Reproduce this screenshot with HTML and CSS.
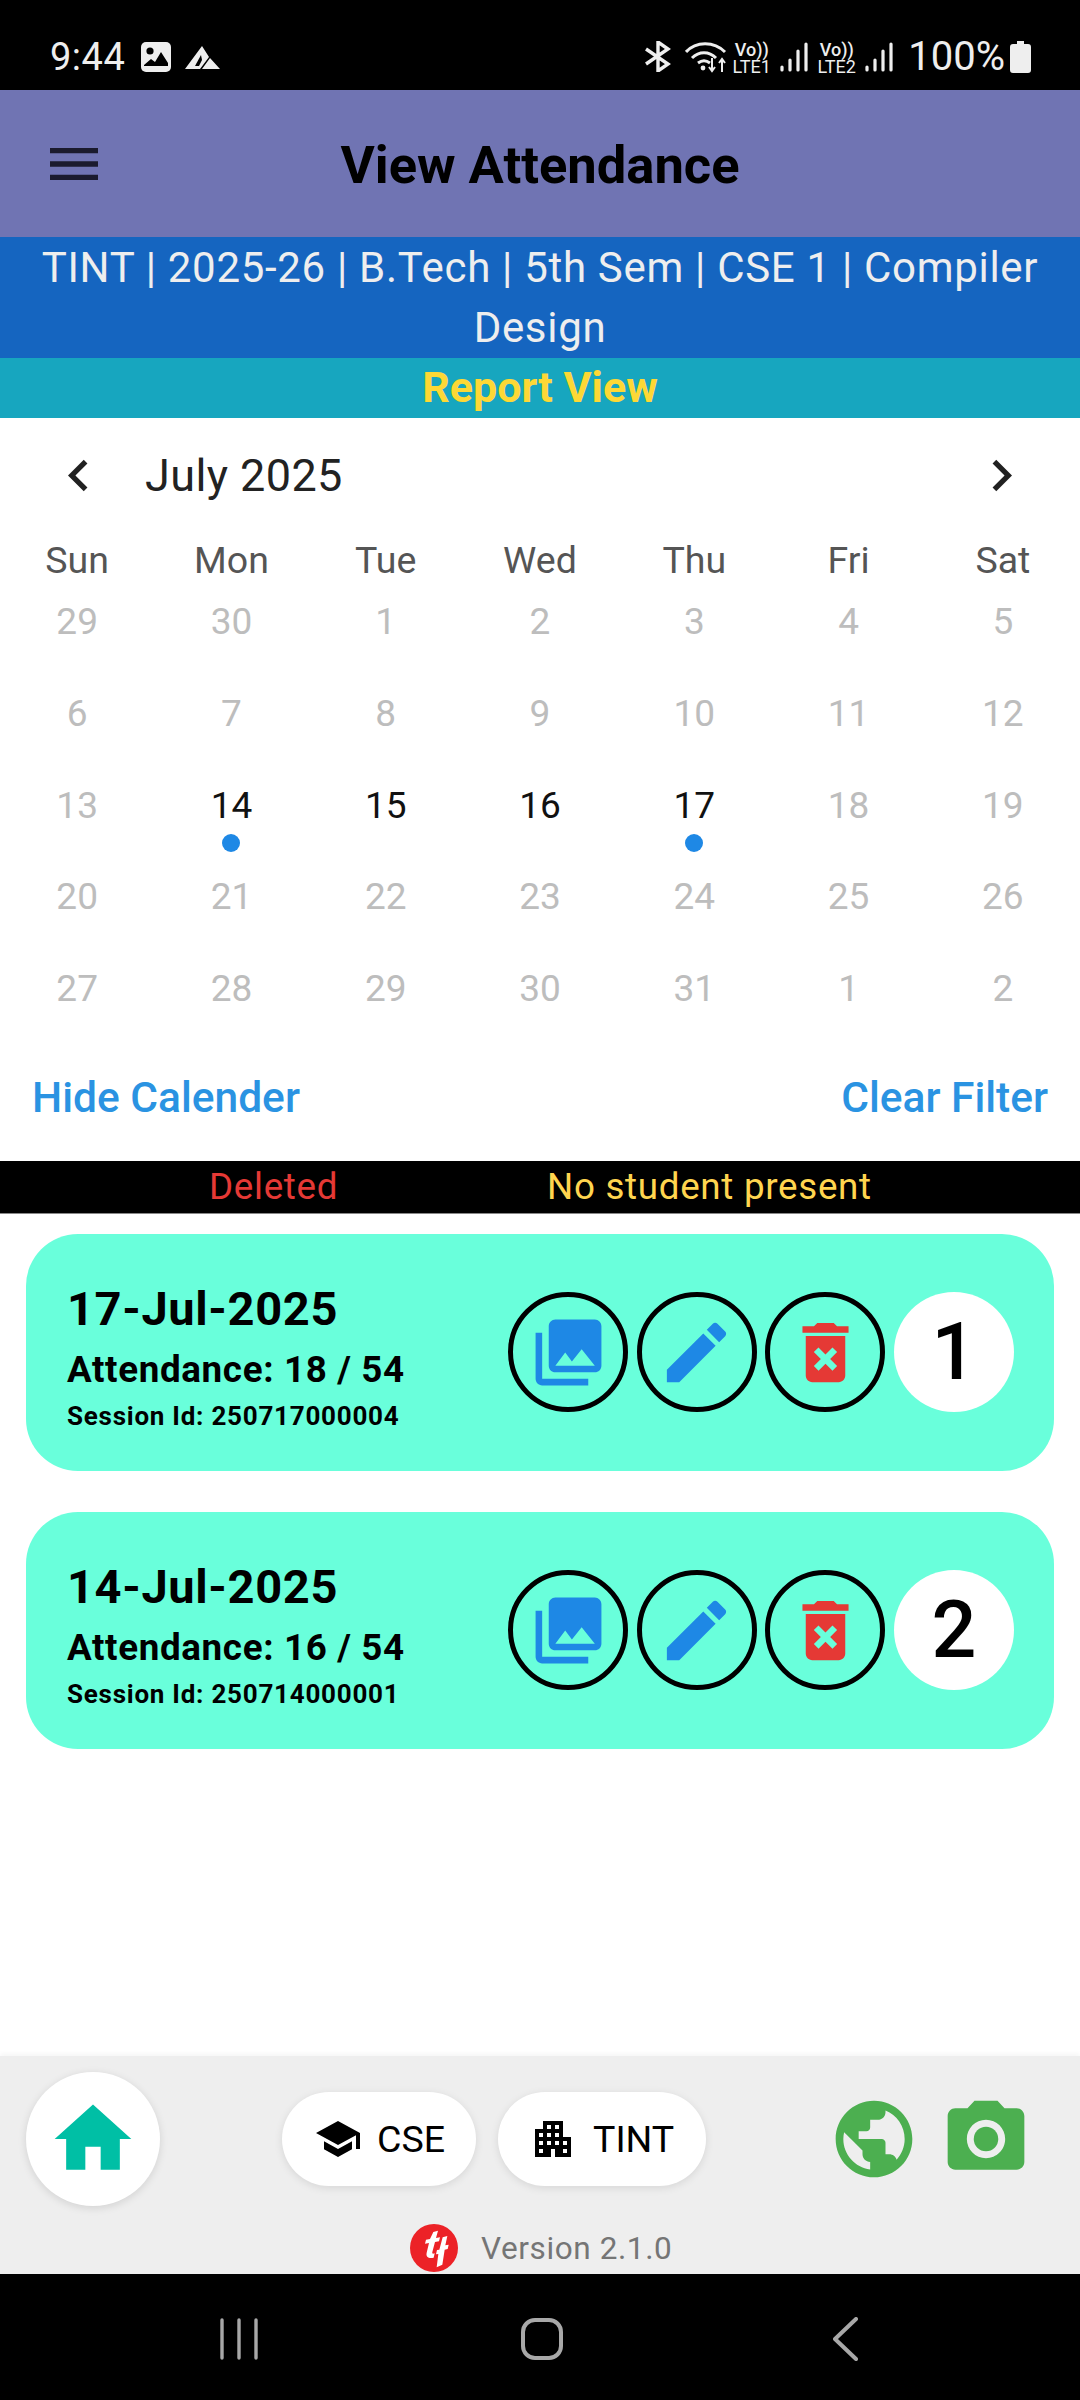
FILE: index.html
```html
<!DOCTYPE html>
<html lang="en">
<head>
  <meta charset="UTF-8">
  <meta name="viewport" content="width=device-width, initial-scale=1.0">
  <title>View Attendance</title>
  <link rel="stylesheet" href="styles.css">
</head>
<body>
  <div class="status-bar">
    <span class="time">9:44</span>
    <svg class="st-gallery" viewBox="0 0 30 30"><path fill="#eee" d="M5 0h20a5 5 0 0 1 5 5v20a5 5 0 0 1-5 5H5a5 5 0 0 1-5-5V5a5 5 0 0 1 5-5z"/><circle cx="9" cy="9" r="3.6" fill="#000"/><path fill="#000" d="M3 23l7-6 4 3 6-10 7 11v3H3z"/></svg>
    <svg class="st-logo" viewBox="0 0 35 23"><path fill="#eee" d="M17 0l7 11-9 12H0zM25 12l10 11H17z"/><path fill="#000" d="M16 9l-6 11h4l3-6z"/></svg>
    <span class="st-spacer"></span>
    <svg class="st-bt" viewBox="0 0 27 31"><path fill="none" stroke="#eee" stroke-width="3.4" d="M2 8l22 15-10 7V1l10 7L2 23"/></svg>
    <svg class="st-wifi" viewBox="0 0 42 32"><g fill="none" stroke="#eee" stroke-width="3"><path d="M1 11C11 0 29 0 40 11"/><path d="M7 17c7-7 17-7 24 0"/><path d="M13 22c4-3 8-3 12 0"/></g><circle cx="18" cy="27" r="2.4" fill="#eee"/><path fill="none" stroke="#eee" stroke-width="2" d="M27 17v13m-3-4l3 4 3-4M37 31V18m-3 4l3-4 3 4"/></svg>
    <div class="st-volte"><span class="st-vo">Vo))</span><span class="st-lte">LTE1</span></div>
    <svg class="st-signal" viewBox="0 0 28 30"><path stroke="#eee" stroke-width="3.2" stroke-linecap="round" d="M2 28v-3M10 28V18M18 28V9M26 28V2"/></svg>
    <div class="st-volte"><span class="st-vo">Vo))</span><span class="st-lte">LTE2</span></div>
    <svg class="st-signal" viewBox="0 0 28 30"><path stroke="#eee" stroke-width="3.2" stroke-linecap="round" d="M2 28v-3M10 28V18M18 28V9M26 28V2"/></svg>
    <span class="st-pct">100%</span>
    <svg class="st-batt" viewBox="0 0 21 32"><path fill="#eee" d="M7 0h7v3h4a3 3 0 0 1 3 3v23a3 3 0 0 1-3 3H3a3 3 0 0 1-3-3V6a3 3 0 0 1 3-3h4z"/></svg>
  </div>

  <header class="app-bar">
    <svg class="menu-icon" viewBox="0 0 24 24"><path d="M3 18h18v-2H3v2zm0-5h18v-2H3v2zm0-7v2h18V6H3z"/></svg>
    <h1>View Attendance</h1>
  </header>
  <div class="course-strip">TINT | 2025-26 | B.Tech | 5th Sem | CSE 1 | Compiler Design</div>
  <div class="view-strip">Report View</div>

  <section class="calendar">
    <div class="cal-header">
      <svg class="cal-chev" viewBox="0 0 24 24"><path d="M15.41 7.41L14 6l-6 6 6 6 1.41-1.41L10.83 12z"/></svg>
      <span class="cal-month">July 2025</span>
      <svg class="cal-chev" viewBox="0 0 24 24"><path d="M10 6L8.59 7.41 13.17 12l-4.58 4.59L10 18l6-6z"/></svg>
    </div>
    <div class="cal-grid cal-week">
      <span>Sun</span><span>Mon</span><span>Tue</span><span>Wed</span><span>Thu</span><span>Fri</span><span>Sat</span>
    </div>
    <div class="cal-grid cal-days">
      <span>29</span><span>30</span><span>1</span><span>2</span><span>3</span><span>4</span><span>5</span>
      <span>6</span><span>7</span><span>8</span><span>9</span><span>10</span><span>11</span><span>12</span>
      <span>13</span><span class="on mark">14</span><span class="on">15</span><span class="on">16</span><span class="on mark">17</span><span>18</span><span>19</span>
      <span>20</span><span>21</span><span>22</span><span>23</span><span>24</span><span>25</span><span>26</span>
      <span>27</span><span>28</span><span>29</span><span>30</span><span>31</span><span>1</span><span>2</span>
    </div>
    <div class="cal-actions">
      <span>Hide Calender</span>
      <span>Clear Filter</span>
    </div>
  </section>

  <div class="legend">
    <span class="legend-del">Deleted</span>
    <span class="legend-none">No student present</span>
  </div>

  <main class="cards">
    <div class="card">
      <div class="card-info">
        <div class="card-date">17-Jul-2025</div>
        <div class="card-att">Attendance: 18 / 54</div>
        <div class="card-sid">Session Id: 250717000004</div>
      </div>
      <div class="card-btns">
        <span class="round"><svg viewBox="0 0 24 24" class="blue"><path d="M22 16V4c0-1.1-.9-2-2-2H8c-1.1 0-2 .9-2 2v12c0 1.1.9 2 2 2h12c1.1 0 2-.9 2-2zm-11-4l2.03 2.71L16 11l4 5H8l3-4zM2 6v14c0 1.1.9 2 2 2h14v-2H4V6H2z"/></svg></span>
        <span class="round"><svg viewBox="0 0 24 24" class="blue"><path d="M3 17.25V21h3.75L17.81 9.94l-3.75-3.75L3 17.25zM20.71 7.04c.39-.39.39-1.02 0-1.41l-2.34-2.34c-.39-.39-1.02-.39-1.41 0l-1.83 1.83 3.75 3.75 1.83-1.83z"/></svg></span>
        <span class="round"><svg viewBox="0 0 24 24" class="red"><path d="M6 19c0 1.1.9 2 2 2h8c1.1 0 2-.9 2-2V7H6v12zm2.46-7.12l1.41-1.41L12 12.59l2.12-2.12 1.41 1.41L13.41 14l2.12 2.12-1.41 1.41L12 15.41l-2.12 2.12-1.41-1.41L10.59 14l-2.13-2.12zM15.5 4l-1-1h-5l-1 1H5v2h14V4z"/></svg></span>
        <span class="count">1</span>
      </div>
    </div>
    <div class="card">
      <div class="card-info">
        <div class="card-date">14-Jul-2025</div>
        <div class="card-att">Attendance: 16 / 54</div>
        <div class="card-sid">Session Id: 250714000001</div>
      </div>
      <div class="card-btns">
        <span class="round"><svg viewBox="0 0 24 24" class="blue"><path d="M22 16V4c0-1.1-.9-2-2-2H8c-1.1 0-2 .9-2 2v12c0 1.1.9 2 2 2h12c1.1 0 2-.9 2-2zm-11-4l2.03 2.71L16 11l4 5H8l3-4zM2 6v14c0 1.1.9 2 2 2h14v-2H4V6H2z"/></svg></span>
        <span class="round"><svg viewBox="0 0 24 24" class="blue"><path d="M3 17.25V21h3.75L17.81 9.94l-3.75-3.75L3 17.25zM20.71 7.04c.39-.39.39-1.02 0-1.41l-2.34-2.34c-.39-.39-1.02-.39-1.41 0l-1.83 1.83 3.75 3.75 1.83-1.83z"/></svg></span>
        <span class="round"><svg viewBox="0 0 24 24" class="red"><path d="M6 19c0 1.1.9 2 2 2h8c1.1 0 2-.9 2-2V7H6v12zm2.46-7.12l1.41-1.41L12 12.59l2.12-2.12 1.41 1.41L13.41 14l2.12 2.12-1.41 1.41L12 15.41l-2.12 2.12-1.41-1.41L10.59 14l-2.13-2.12zM15.5 4l-1-1h-5l-1 1H5v2h14V4z"/></svg></span>
        <span class="count">2</span>
      </div>
    </div>
  </main>

  <footer class="bottom">
    <div class="bottom-row">
      <span class="home-btn"><svg viewBox="0 0 24 24"><path d="M10 20v-6h4v6h5v-8h3L12 3 2 12h3v8z"/></svg></span>
      <span class="pill pill-cse"><svg viewBox="0 0 24 24"><path d="M5 13.18v4L12 21l7-3.82v-4L12 17l-7-3.82zM12 3L1 9l11 6 9-4.91V17h2V9L12 3z"/></svg>CSE</span>
      <span class="pill pill-tint"><svg viewBox="0 0 24 24"><path d="M17 11V3H7v4H3v14h8v-4h2v4h8V11h-4zM7 19H5v-2h2v2zm0-4H5v-2h2v2zm0-4H5V9h2v2zm4 4H9v-2h2v2zm0-4H9V9h2v2zm0-4H9V5h2v2zm4 8h-2v-2h2v2zm0-4h-2V9h2v2zm0-4h-2V5h2v2zm4 12h-2v-2h2v2zm0-4h-2v-2h2v2z"/></svg>TINT</span>
      <svg class="green-icon globe" viewBox="0 0 24 24"><path d="M12 2C6.48 2 2 6.48 2 12s4.48 10 10 10 10-4.48 10-10S17.52 2 12 2zm-1 17.93c-3.95-.49-7-3.85-7-7.93 0-.62.08-1.21.21-1.79L9 15v1c0 1.1.9 2 2 2v1.93zm6.9-2.54c-.26-.81-1-1.39-1.9-1.39h-1v-3c0-.55-.45-1-1-1H8v-2h2c.55 0 1-.45 1-1V7h2c1.1 0 2-.9 2-2v-.41c2.93 1.19 5 4.06 5 7.41 0 2.08-.8 3.97-2.1 5.39z"/></svg>
      <svg class="green-icon camera" viewBox="0 0 24 24"><circle cx="12" cy="12" r="3.2"/><path d="M9 2L7.17 4H4c-1.1 0-2 .9-2 2v12c0 1.1.9 2 2 2h16c1.1 0 2-.9 2-2V6c0-1.1-.9-2-2-2h-3.17L15 2H9zm3 15c-2.76 0-5-2.24-5-5s2.24-5 5-5 5 2.24 5 5-2.24 5-5 5z"/></svg>
    </div>
    <div class="version">
      <svg class="brand" viewBox="0 0 144 144"><circle cx="72" cy="72" r="72" fill="#ec2227"/><path fill="#fff" d="M70 24l14-4-6 22 12-2-3 12-12 2-8 30c-1 5 1 6 7 4l-3 13c-15 3-24-2-21-15l7-29-12 2 3-12 12-2z"/><path fill="#fff" d="M98 40l14-4-6 28 10-2-3 13-9 2-7 45-17 8 5-40-7 1 3-13 7-1z"/></svg>
      <span>Version 2.1.0</span>
    </div>
  </footer>

  <nav class="nav-bar">
    <svg class="nav-recents" viewBox="0 0 38 42"><path stroke="#a8a8a8" stroke-width="3.4" stroke-linecap="round" d="M2 2v38M19 2v38M36 2v38"/></svg>
    <svg class="nav-home" viewBox="0 0 42 42"><rect x="2" y="2" width="38" height="38" rx="12" fill="none" stroke="#a8a8a8" stroke-width="4"/></svg>
    <svg class="nav-back" viewBox="0 0 25 44"><path fill="none" stroke="#a8a8a8" stroke-width="4" stroke-linecap="round" stroke-linejoin="round" d="M23 2L2 22l21 20"/></svg>
  </nav>
</body>
</html>
```

FILE: styles.css
```css
* {
  box-sizing: border-box;
}
html, body {
  margin: 0;
  padding: 0;
}
body {
  width: 1080px;
  height: 2400px;
  display: flex;
  flex-direction: column;
  font-family: 'Roboto', 'Liberation Sans', sans-serif;
  background: #fff;
  overflow: hidden;
}
svg {
  display: block;
  flex: none;
}

/* status bar */
.status-bar {
  height: 90px;
  background: #000;
  color: #eee;
  display: flex;
  align-items: center;
  padding: 23px 49px 0 50px;
}
.time {
  font-size: 38px;
  width: 91px;
  letter-spacing: 0.5px;
}
.st-gallery {
  width: 30px;
  height: 30px;
}
.st-logo {
  width: 35px;
  height: 23px;
  margin-left: 14px;
  margin-top: 2px;
}
.st-spacer {
  flex: 1;
}
.st-bt {
  width: 27px;
  height: 31px;
  margin-right: 14px;
}
.st-wifi {
  width: 42px;
  height: 32px;
  margin-right: 4px;
}
.st-volte {
  width: 41px;
  display: flex;
  flex-direction: column;
  align-items: center;
  line-height: 1;
  margin-right: 8px;
}
.st-vo {
  font-size: 18px;
  font-weight: 500;
  height: 17px;
}
.st-lte {
  font-size: 18px;
  height: 15px;
}
.st-signal {
  width: 28px;
  height: 30px;
  margin-right: 8px;
}
.st-pct {
  font-size: 40px;
  margin-left: 7px;
  margin-right: 5px;
}
.st-batt {
  width: 21px;
  height: 32px;
}

/* headers */
.app-bar {
  height: 147px;
  background: #7074b3;
  display: flex;
  align-items: center;
  padding-left: 42px;
}
.menu-icon {
  width: 64px;
  height: 64px;
  fill: #1b1b2e;
}
.app-bar h1 {
  flex: 1;
  margin: 2px 106px 0 0;
  font-size: 52.5px;
  font-weight: 700;
  color: #000;
  text-align: center;
}
.course-strip {
  height: 121px;
  background: #1565c0;
  color: #eee;
  font-size: 42px;
  line-height: 60px;
  letter-spacing: 0.7px;
  text-align: center;
  padding: 1px 30px 0;
}
.view-strip {
  height: 60px;
  background: #17a6bf;
  color: #fdd835;
  font-size: 43px;
  font-weight: 700;
  line-height: 59px;
  text-align: center;
}

/* calendar */
.calendar {
  height: 743px;
  background: #fff;
}
.cal-header {
  height: 115px;
  display: flex;
  align-items: center;
  padding: 0 47px;
}
.cal-chev {
  width: 63px;
  height: 63px;
  fill: #212121;
}
.cal-month {
  font-size: 45px;
  color: #222;
  margin-left: 35px;
  flex: 1;
  letter-spacing: 0.4px;
}
.cal-grid {
  display: grid;
  grid-template-columns: repeat(7, 1fr);
  text-align: center;
}
.cal-week {
  height: 54px;
  align-items: center;
  font-size: 37.5px;
  color: #555;
}
.cal-days span {
  height: 91.8px;
  line-height: 70px;
  font-size: 37px;
  color: #bdbdbd;
  position: relative;
}
.cal-days .on {
  color: #111;
}
.cal-days .mark::after {
  content: "";
  position: absolute;
  left: 50%;
  top: 63px;
  width: 18px;
  height: 18px;
  margin-left: -9px;
  border-radius: 50%;
  background: #1e88e5;
}
.cal-actions {
  display: flex;
  justify-content: space-between;
  padding: 27px 32px 0;
  font-size: 42.5px;
  font-weight: 500;
  color: #2a93e2;
}

/* legend */
.legend {
  height: 53px;
  background: #000;
  border-bottom: 1px solid #888;
  font-size: 36.75px;
  line-height: 51px;
  letter-spacing: 0.7px;
  display: flex;
  padding-left: 209px;
}
.legend-del {
  width: 338px;
  color: #e53935;
}
.legend-none {
  color: #ffd54f;
}

/* cards */
.cards {
  flex: 1;
  padding: 20px 26px 0;
  display: flex;
  flex-direction: column;
  gap: 41px;
}
.card {
  height: 237px;
  border-radius: 52px;
  background: #69ffdb;
  display: flex;
  align-items: center;
  justify-content: space-between;
  padding: 0 40px 0 41px;
}
.card-info {
  color: #000;
  font-weight: 700;
  padding-top: 6px;
}
.card-date {
  font-size: 47px;
  line-height: 60px;
  letter-spacing: 0.65px;
}
.card-att {
  font-size: 36.75px;
  line-height: 56px;
  margin-top: 3px;
  letter-spacing: 0.65px;
}
.card-sid {
  font-size: 26px;
  line-height: 34px;
  margin-top: 1px;
  letter-spacing: 0.75px;
}
.card-btns {
  display: flex;
  gap: 8.67px;
  margin-top: -1px;
}
.round,
.count {
  width: 120px;
  height: 120px;
  border-radius: 50%;
  display: flex;
  align-items: center;
  justify-content: center;
}
.round {
  border: 5px solid #000;
}
.round svg {
  width: 79px;
  height: 79px;
}
.blue {
  fill: #1e88e5;
}
.red {
  fill: #e53935;
}
.count {
  background: #fff;
  font-size: 79px;
  font-weight: 500;
  color: #000;
}

/* bottom bar */
.bottom {
  height: 218px;
  background: #eee;
  box-shadow: 0 -3px 4px rgba(0, 0, 0, 0.03);
  padding: 16px 0 0 26px;
}
.bottom-row {
  display: flex;
  align-items: center;
  height: 134px;
}
.home-btn {
  width: 134px;
  height: 134px;
  border-radius: 50%;
  background: #fff;
  box-shadow: 0 2px 8px rgba(0, 0, 0, 0.12);
  display: flex;
  align-items: center;
  justify-content: center;
}
.home-btn svg {
  width: 92px;
  height: 92px;
  fill: #00bfa5;
}
.pill {
  height: 94px;
  border-radius: 47px;
  background: #fff;
  box-shadow: 0 2px 8px rgba(0, 0, 0, 0.1);
  display: flex;
  align-items: center;
  font-size: 37.5px;
  color: #000;
}
.pill svg {
  width: 48px;
  height: 48px;
}
.pill-cse {
  width: 194px;
  margin-left: 122px;
  padding-left: 32px;
  gap: 15px;
}
.pill-tint {
  width: 208px;
  margin-left: 22px;
  padding-left: 31px;
  gap: 16px;
}
.green-icon {
  width: 92px;
  height: 92px;
  fill: #4caf50;
}
.globe {
  margin-left: 122px;
}
.camera {
  margin-left: 20px;
}
.version {
  display: flex;
  align-items: center;
  height: 52px;
  margin: 16px 0 0 384px;
  font-size: 31.5px;
  color: #757575;
  gap: 23px;
  letter-spacing: 0.6px;
}
.brand {
  width: 48px;
  height: 48px;
}

/* nav */
.nav-bar {
  height: 126px;
  background: #000;
  display: flex;
  align-items: center;
  padding: 4px 0 0 220px;
}
.nav-recents {
  width: 38px;
  height: 42px;
}
.nav-home {
  width: 42px;
  height: 42px;
  margin-left: 263px;
}
.nav-back {
  width: 25px;
  height: 44px;
  margin-left: 270px;
}
```
